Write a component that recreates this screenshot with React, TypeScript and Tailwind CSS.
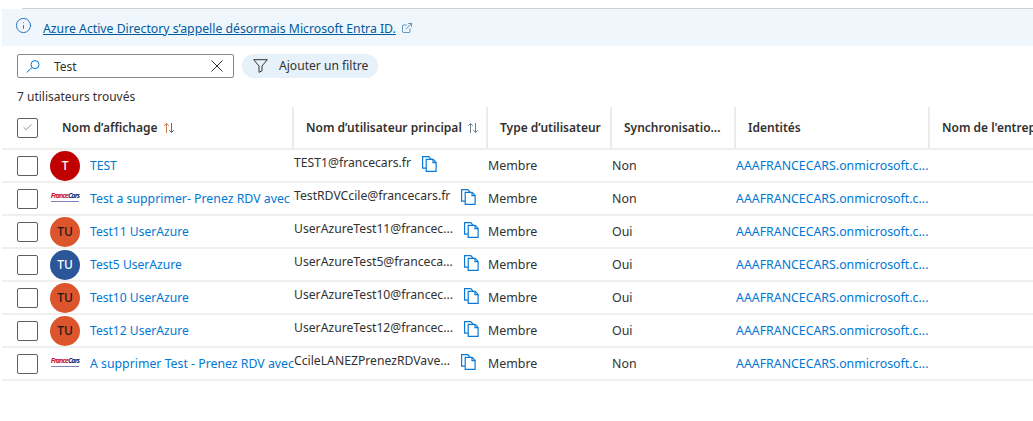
import { Info, ExternalLink, Check } from "lucide-react";

const users = [
  { initials: "T", color: "bg-[#c00000] text-white", name: "TEST", upn: "TEST1@francecars.fr", sync: "Non" },
  { logo: true, name: "Test a supprimer- Prenez RDV avec Ccile", upn: "TestRDVCcile@francecars.fr", sync: "Non" },
  { initials: "TU", color: "bg-[#dc552c] text-[#1a1a1a]", name: "Test11 UserAzure", upn: "UserAzureTest11@francec...", sync: "Oui" },
  { initials: "TU", color: "bg-[#2b579a] text-white", name: "Test5 UserAzure", upn: "UserAzureTest5@franceca...", sync: "Oui" },
  { initials: "TU", color: "bg-[#dc552c] text-[#1a1a1a]", name: "Test10 UserAzure", upn: "UserAzureTest10@francec...", sync: "Oui" },
  { initials: "TU", color: "bg-[#dc552c] text-[#1a1a1a]", name: "Test12 UserAzure", upn: "UserAzureTest12@francec...", sync: "Oui" },
  { logo: true, name: "A supprimer Test - Prenez RDV avec Ccile LANEZ", upn: "CcileLANEZPrenezRDVave...", sync: "Non" },
];

function SortIcon({ warm }: { warm?: boolean }) {
  return (
    <svg width="12" height="12" viewBox="0 0 12 12" fill="none" strokeWidth="1">
      <path d="M3.5 11V1.5M1.2 3.8 3.5 1.5l2.3 2.3" stroke={warm ? "#c8764a" : "#6b7f8f"} />
      <path d="M8.5 1v9.5M6.2 8.2l2.3 2.3 2.3-2.3" stroke={warm ? "#5f6b78" : "#6b7f8f"} />
    </svg>
  );
}

function CopyIcon() {
  return (
    <svg width="15" height="16" viewBox="0 0 15 16" fill="none" stroke="#0a7ad6" strokeWidth="1.2">
      <path d="M4 12.2H.6V.6h6.2l2.2 2.6" />
      <path d="M4.2 3.4h7l2.9 3v8.9H4.2z" fill="#fff" />
      <path d="M11 3.4v3.2h3.1" />
    </svg>
  );
}

function SearchGlass() {
  return (
    <svg width="14" height="13" viewBox="0 0 14 13" fill="none" stroke="#0078d4" strokeWidth="1">
      <circle cx="9" cy="4.6" r="4" />
      <path d="M6 7.6.7 12.4" />
    </svg>
  );
}

function CloseGlyph() {
  return (
    <svg width="12" height="12" viewBox="0 0 12 12" fill="none" stroke="#323130" strokeWidth="1">
      <path d="M.5.5l11 11M11.5.5l-11 11" />
    </svg>
  );
}

function FilterGlyph() {
  return (
    <svg width="15" height="14" viewBox="0 0 15 14" fill="none" stroke="#323130" strokeWidth="1">
      <path d="M.7.7h13.6L9 7v4.8l-3 1.5V7z" />
    </svg>
  );
}

function FranceCarsLogo() {
  return (
    <div className="flex w-[30px] flex-col items-center overflow-hidden pb-[3px]">
      <span className="text-[7px] leading-[8px] font-bold tracking-[-0.85px] whitespace-nowrap italic">
        <span className="text-[#c8102e]">France</span>
        <span className="text-[#1f2a6b]">Cars</span>
      </span>
      <div className="mt-[1px] h-px w-[28px] bg-[#7f82b8]" />
    </div>
  );
}

function Head({ className, children }: { className: string; children: React.ReactNode }) {
  return (
    <div className={`flex h-full items-center border-r-2 border-[#edebe9] font-semibold text-[#323130] ${className}`}>
      {children}
    </div>
  );
}

export default function App() {
  return (
    <div className="h-[421px] w-[1033px] overflow-hidden bg-white text-[12.3px] text-[#323130] [font-family:'Noto_Sans',sans-serif]">
      <div className="h-[9px] pt-[8px] pl-[22px]">
        <div className="h-px bg-[#cfcfcf]" />
      </div>
      <div className="ml-[2px] flex h-[37px] bg-[#eff6fc] pt-[9px] pl-[13px]">
        <Info size={17} strokeWidth={1.2} className="mt-[-1px] text-[#0b5fb0]" />
        <a className="mt-[2px] ml-[11px] h-[18px] text-[12.25px] leading-[17px] text-[#005a9e] underline">
          Azure Active Directory s’appelle désormais Microsoft Entra ID.
        </a>
        <ExternalLink size={12} strokeWidth={1.2} className="mt-[4px] ml-[5px] text-[#005a9e]" />
      </div>

      <div className="mt-[8px] flex items-center pl-[17px]">
        <div className="flex h-[24px] w-[217px] items-center rounded-[2px] border border-[#8a8886] pr-[10px] pl-[8px]">
          <SearchGlass />
          <span className="ml-[14px] flex-1 pt-[1px] text-[12px] text-[#323130]">Test</span>
          <CloseGlyph />
        </div>
        <div className="ml-[8px] flex h-[24px] w-[136px] items-center rounded-full bg-[#e6f1fa] pl-[11px]">
          <FilterGlyph />
          <span className="ml-[11px] pt-[1px] text-[12.1px] text-[#323130]">Ajouter un filtre</span>
        </div>
      </div>

      <div className="mt-[10px] h-[18px] pl-[17px] text-[12px] leading-[18px]">7 utilisateurs trouvés</div>

      <div className="mt-[1px] ml-[2px] flex h-[43px] items-center border-b-2 border-[#f0efee] text-[12px]">
        <div className="flex h-full w-[60px] items-center pl-[15px]">
          <div className="flex h-[20px] w-[21px] items-center justify-center rounded-[2px] border border-[#605e5c]">
            <Check size={11} strokeWidth={1.4} className="text-[#605e5c]" />
          </div>
        </div>
        <Head className="w-[232px] gap-[5px]">
          Nom d’affichage <SortIcon warm />
        </Head>
        <Head className="w-[194px] gap-[5px] pl-[12px]">
          Nom d’utilisateur principal <SortIcon />
        </Head>
        <Head className="w-[124px] pl-[12px]">Type d’utilisateur</Head>
        <Head className="w-[124px] pl-[12px]">Synchronisatio...</Head>
        <Head className="w-[194px] pl-[12px]">Identités</Head>
        <div className="flex h-full flex-1 items-center overflow-hidden pl-[12px] font-semibold whitespace-nowrap">
          Nom de l'entreprise
        </div>
      </div>

      {users.map((u) => (
        <div key={u.upn} className="ml-[2px] flex h-[33px] items-center border-b-2 border-[#f0efee]">
          <div className="w-[15px]" />
          <div className="h-[20px] w-[21px] rounded-[2px] border border-[#605e5c]" />
          <div className="ml-[12px] flex w-[30px] justify-center">
            {u.logo ? (
              <FranceCarsLogo />
            ) : (
              <div className={`flex h-[30px] w-[30px] items-center justify-center rounded-full text-[12px] font-medium ${u.color}`}>
                {u.initials}
              </div>
            )}
          </div>
          <div className={`ml-[10px] w-[204px] overflow-hidden pt-[2px] whitespace-nowrap text-[#0078d4] ${u.logo ? "text-[12.3px]" : "text-[12.1px]"}`}>
            {u.name}
          </div>
          <div className="flex w-[194px] items-center pb-[4px] text-[12.2px] whitespace-nowrap text-[#323130]">
            {u.upn}
            <span className="ml-[11px] pt-[1px]">
              <CopyIcon />
            </span>
          </div>
          <div className="w-[124px] pt-[2px] text-[12.4px]">Membre</div>
          <div className="w-[124px] pt-[2px] text-[12.4px]">{u.sync}</div>
          <div className="w-[194px] pt-[2px] text-[12.35px] text-[#0078d4]">AAAFRANCECARS.onmicrosoft.c...</div>
        </div>
      ))}
    </div>
  );
}
